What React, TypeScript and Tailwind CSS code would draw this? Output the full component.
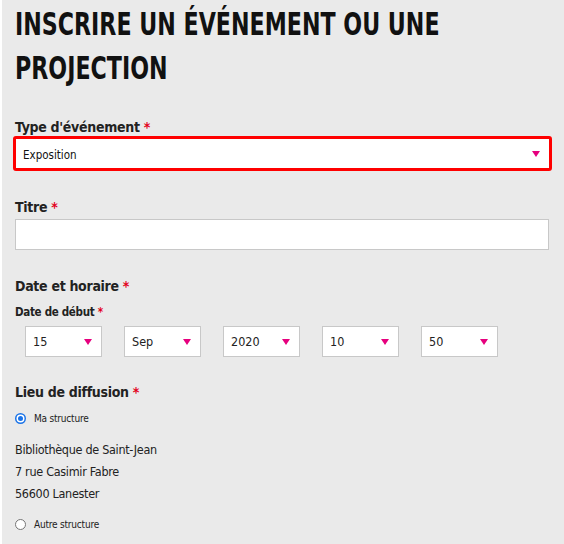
const font = "font-['DejaVu_Sans_Condensed','DejaVu_Sans',sans-serif]";

function Caret() {
  return (
    <svg width="8" height="6" viewBox="0 0 8 6" className="shrink-0">
      <path d="M0 0 H8 L4 6 Z" fill="#e6007e" />
    </svg>
  );
}

function Star() {
  return <span className="text-[#e3001b]">*</span>;
}

function SmallSelect({ value }: { value: string }) {
  return (
    <div className="flex h-[31px] w-[77px] items-center justify-between border border-[#c8c8c8] bg-white pl-[7px] pr-[9px] text-[12.5px] text-[#222]">
      <span className="pt-[2px]">{value}</span>
      <Caret />
    </div>
  );
}

function Radio({ checked, label }: { checked?: boolean; label: string }) {
  return (
    <label className="flex h-[16px] items-center gap-[8px] text-[10px] tracking-[-0.2px] text-[#222]">
      {checked ? (
        <span className="flex h-[11px] w-[11px] items-center justify-center rounded-full bg-[#1a73e8]">
          <span className="h-[5px] w-[5px] rounded-full bg-[#1a73e8] ring-[1.5px] ring-white" />
        </span>
      ) : (
        <span className="h-[11px] w-[11px] rounded-full border border-[#767676] bg-white" />
      )}
      {label}
    </label>
  );
}

export default function App() {
  return (
    <div className={`min-h-[544px] bg-white pl-[2px] ${font}`}>
      <div className="min-h-[544px] bg-[#eaeaea] px-[13px] pt-[2px]">
        <h1 className="origin-left scale-x-[0.77] whitespace-nowrap text-[32px] font-bold leading-[44px] text-[#111]">
          INSCRIRE UN ÉVÉNEMENT OU UNE
          <br />
          PROJECTION
        </h1>

        <div className="mt-[28px] text-[14px] font-bold leading-[18px] tracking-[-0.3px] text-[#222]">
          Type d'événement <Star />
        </div>
        <div className="-ml-[2px] flex h-[35px] w-[539px] items-center justify-between rounded-[3px] border-[3px] border-[#ff0000] bg-white pl-[7px] pr-[9px] text-[11.5px] text-[#111]">
          <span className="pt-[5px]">Exposition</span>
          <Caret />
        </div>

        <div className="mt-[27px] text-[14px] font-bold leading-[18px] tracking-[-0.3px] text-[#222]">
          Titre <Star />
        </div>
        <div className="mt-[3px] h-[31px] w-[534px] border border-[#c8c8c8] bg-white" />

        <div className="mt-[27px] text-[14px] font-bold leading-[18px] tracking-[-0.3px] text-[#222]">
          Date et horaire <Star />
        </div>
        <div className="mt-[9px] text-[11.5px] font-bold leading-[16px] tracking-[-0.3px] text-[#222]">
          Date de début <Star />
        </div>
        <div className="ml-[10px] mt-[6px] flex gap-[22px]">
          <SmallSelect value="15" />
          <SmallSelect value="Sep" />
          <SmallSelect value="2020" />
          <SmallSelect value="10" />
          <SmallSelect value="50" />
        </div>

        <div className="mt-[26px] text-[14px] font-bold leading-[18px] tracking-[-0.3px] text-[#222]">
          Lieu de diffusion <Star />
        </div>
        <div className="mt-[9px]">
          <Radio checked label="Ma structure" />
        </div>
        <div className="mt-[13px] text-[12.5px] leading-[22px] tracking-[-0.3px] text-[#222]">
          <div>Bibliothèque de Saint-Jean</div>
          <div>7 rue Casimir Fabre</div>
          <div>56600 Lanester</div>
        </div>
        <div className="mt-[11px]">
          <Radio label="Autre structure" />
        </div>
      </div>
    </div>
  );
}
